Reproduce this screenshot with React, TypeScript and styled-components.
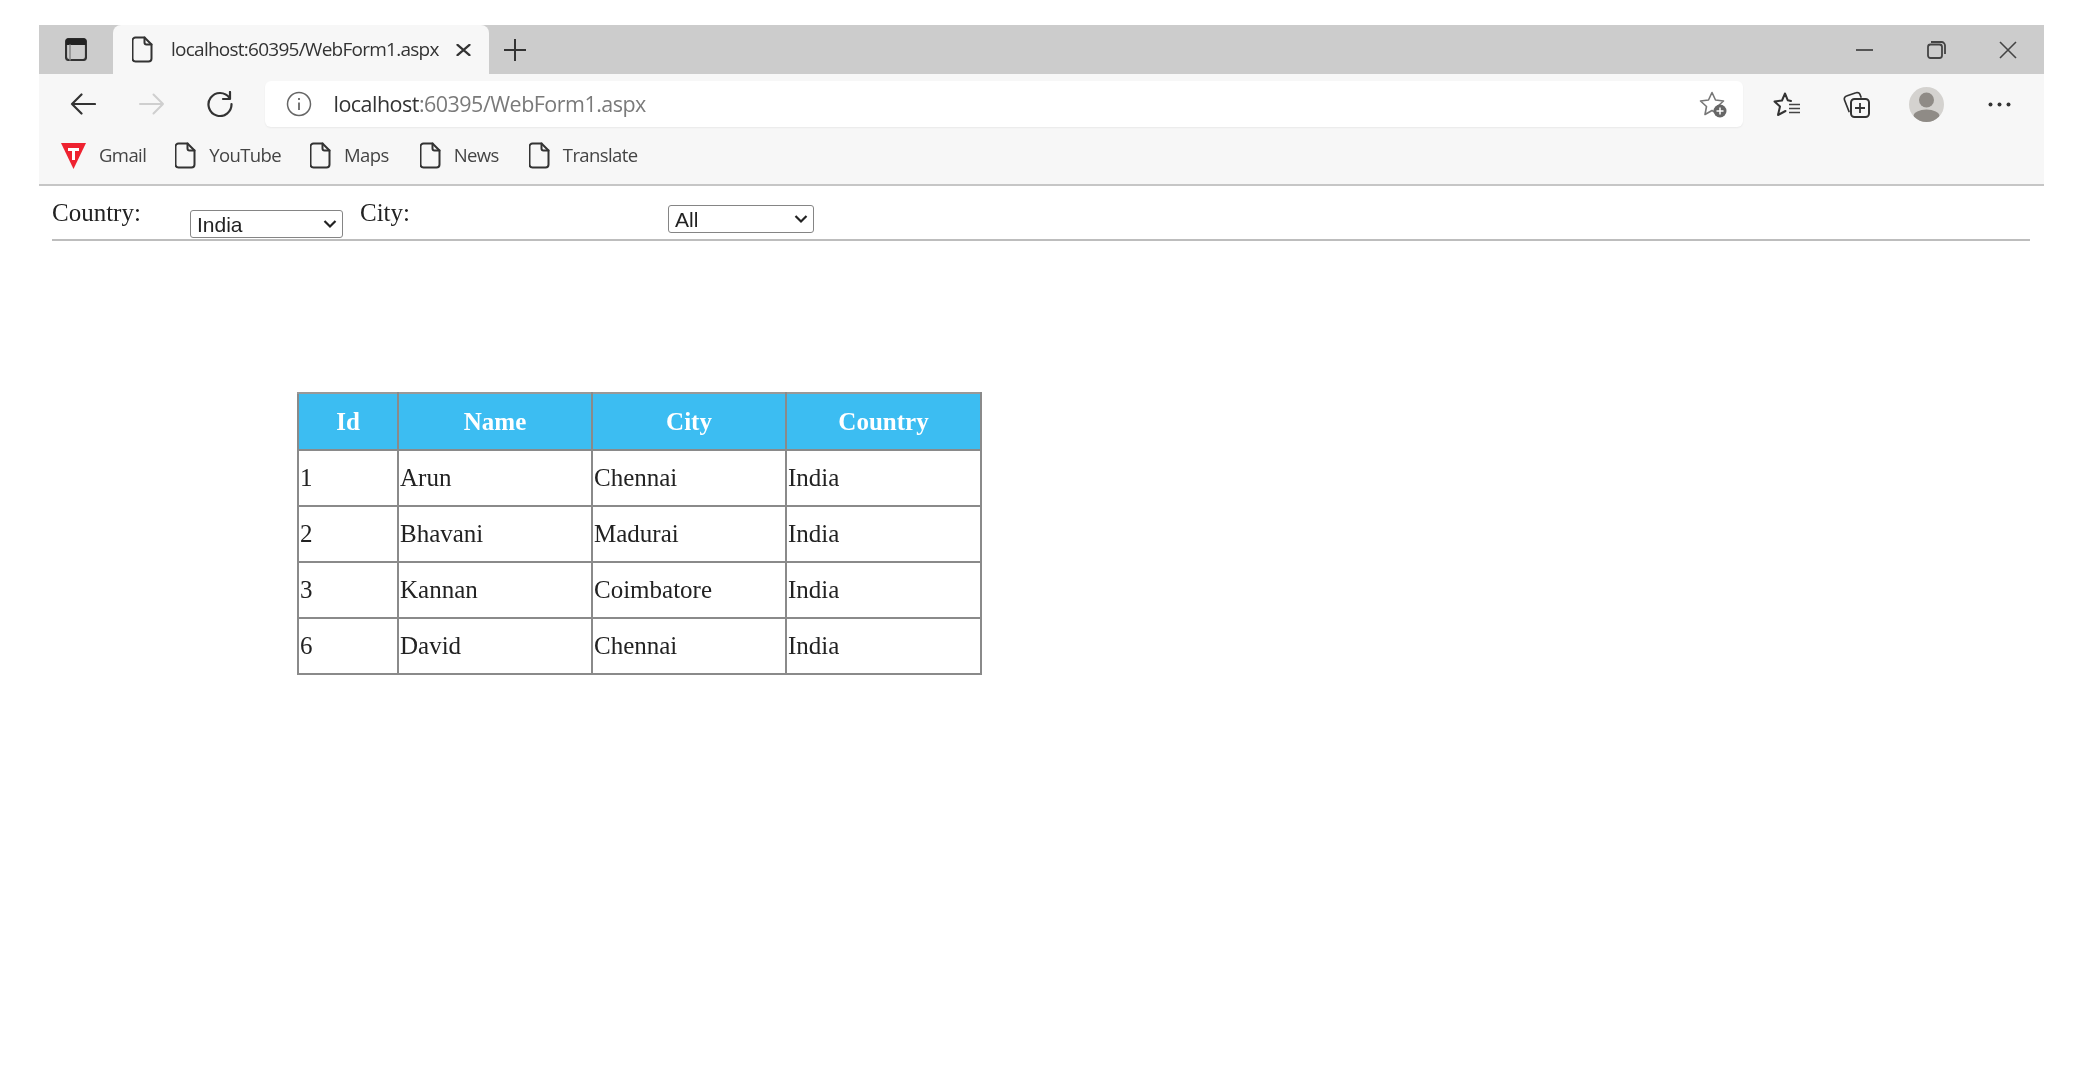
import React from "react";
import styled, { createGlobalStyle } from "styled-components";

const Global = createGlobalStyle`
  html, body { margin: 0; padding: 0; background: #fff; height: 1080px; overflow: hidden; }
  #root { height: 1080px; }
`;

const Page = styled.div`
  height: 1080px;
  box-sizing: border-box;
  padding: 25px 34px 0 39px;
  background: #fff;
  filter: blur(0.45px);
`;

const TabStrip = styled.div`
  height: 49px;
  background: #cccccc;
  display: flex;
  align-items: stretch;
`;

const SidebarBox = styled.div`
  width: 74px;
  display: flex;
  align-items: center;
  justify-content: center;
`;

const Tab = styled.div`
  width: 376px;
  background: #f7f7f7;
  border-radius: 8px 8px 0 0;
  display: flex;
  align-items: center;
  padding-left: 19px;
  box-sizing: border-box;
`;

const TabTitle = styled.span`
  font: 19px/1 "Open Sans", sans-serif;
  letter-spacing: -0.75px;
  color: #333;
  margin-left: 18px;
  width: 285px;
  white-space: nowrap;
`;

const NewTab = styled.div`
  width: 52px;
  display: flex;
  align-items: center;
  justify-content: center;
`;

const Spacer = styled.div`
  flex: 1;
`;

const WinButton = styled.div`
  width: 72px;
  display: flex;
  align-items: center;
  justify-content: center;
`;

const Toolbar = styled.div`
  height: 112px;
  box-sizing: border-box;
  background: #f7f7f7;
  border-bottom: 2px solid #c6c6c6;
  padding-top: 7px;
`;

const NavRow = styled.div`
  height: 46px;
  display: flex;
  align-items: center;
  padding: 0 12px 0 10px;
`;

const NavButton = styled.div<{ $w?: number }>`
  width: ${(p) => p.$w ?? 68.5}px;
  flex: none;
  display: flex;
  align-items: center;
  justify-content: center;
`;

const Address = styled.div`
  flex: 1;
  height: 46px;
  margin: 0 9px 0 10px;
  background: #fff;
  border-radius: 6px;
  box-shadow: 0 1px 2px rgba(0, 0, 0, 0.06);
  display: flex;
  align-items: center;
  padding: 0 16px 0 21px;
`;

const Url = styled.div`
  flex: 1;
  margin-left: 22px;
  font: 21.5px/1 "Open Sans", sans-serif;
  letter-spacing: -0.52px;
  color: #7a7a7a;
  white-space: nowrap;
`;

const Host = styled.span`
  color: #333;
`;

const Bookmarks = styled.div`
  height: 57px;
  display: flex;
  align-items: center;
  padding-left: 22px;
`;

const Bookmark = styled.div<{ $gap: number }>`
  display: flex;
  align-items: center;
  gap: 13px;
  margin-right: ${(p) => p.$gap}px;
`;

const BookmarkLabel = styled.span`
  font: 18.5px/1 "Open Sans", sans-serif;
  letter-spacing: -0.6px;
  color: #444;
  white-space: nowrap;
`;

const Content = styled.div`
  padding: 0 14px 0 13px;
`;

const FilterRow = styled.div`
  height: 55px;
  box-sizing: border-box;
  border-bottom: 2px solid #bdbdbd;
  display: flex;
  align-items: flex-start;
`;

const FilterLabel = styled.label<{ $w: number }>`
  width: ${(p) => p.$w}px;
  flex: none;
  padding-top: 12px;
  font: 25px/29px "Liberation Serif", serif;
  color: #222;
`;

const SelectWrap = styled.div<{ $w: number; $top: number; $after: number }>`
  position: relative;
  width: ${(p) => p.$w}px;
  height: 28px;
  flex: none;
  margin-top: ${(p) => p.$top}px;
  margin-right: ${(p) => p.$after}px;
`;

const Select = styled.select`
  appearance: none;
  width: 100%;
  height: 100%;
  box-sizing: border-box;
  border: 1.5px solid #858585;
  border-radius: 3px;
  background: #fff;
  padding: 0 0 0 6px;
  margin: 0;
  font: 21px "Liberation Sans", sans-serif;
  color: #222;
`;

const Chevron = styled.svg`
  position: absolute;
  right: 6px;
  top: 9px;
  pointer-events: none;
`;

const DataTable = styled.table`
  margin: 151px 0 0 245px;
  border-collapse: collapse;
  table-layout: fixed;
  width: 684px;
  border: 2px solid #c4c4c4;
  font: 25px "Liberation Serif", serif;
  color: #222;
`;

const HeadCell = styled.th<{ $w: number }>`
  width: ${(p) => p.$w}px;
  height: 55px;
  padding: 0;
  background: #3cbdf2;
  color: #fff;
  font-weight: bold;
  text-align: center;
  border: 2px solid #8a8a8a;
  border-top-color: #999;
`;

const Cell = styled.td`
  height: 54px;
  padding: 0 0 0 1px;
  border: 2px solid #8a8a8a;
`;

const Stroke = { fill: "none", stroke: "#333", strokeWidth: 2, strokeLinecap: "round", strokeLinejoin: "round" } as const;

const DocIcon = () => (
  <svg width="21" height="27" viewBox="0 0 21 27">
    <path d="M3.500 1.500h9l7 7v14a3 3 0 0 1-3 3h-13a3 3 0 0 1-3-3v-18a3 3 0 0 1 3-3z" {...Stroke} />
    <path d="M12.500 1.500v5a2 2 0 0 0 2 2h5" {...Stroke} />
  </svg>
);

const rows = [
  ["1", "Arun", "Chennai", "India"],
  ["2", "Bhavani", "Madurai", "India"],
  ["3", "Kannan", "Coimbatore", "India"],
  ["6", "David", "Chennai", "India"],
];

const bookmarks: [string, number][] = [
  ["YouTube", 29],
  ["Maps", 31],
  ["News", 30],
  ["Translate", 0],
];

const ChevronIcon = () => (
  <Chevron width="14" height="10" viewBox="0 0 14 10">
    <path d="M1.500 2 7 7.500 12.500 2" fill="none" stroke="#222" strokeWidth="2.200" />
  </Chevron>
);

export default function App() {
  return (
    <Page>
      <Global />
      <TabStrip>
        <SidebarBox>
          <svg width="22" height="23" viewBox="0 0 22 23">
            <rect x="1" y="1" width="20" height="21" rx="3" {...Stroke} strokeWidth="2.200" />
            <path d="M1 2.500a2 2 0 0 1 2-2h16a2 2 0 0 1 2 2V7H1z" fill="#222" />
            <path d="M5 7v15" {...Stroke} stroke="#888" strokeWidth="1.500" />
          </svg>
        </SidebarBox>
        <Tab>
          <DocIcon />
          <TabTitle>localhost:60395/WebForm1.aspx</TabTitle>
          <svg width="15" height="12" viewBox="0 0 15 12">
            <path d="M1.500 .8 13.500 11.200M13.500 .8 1.500 11.200" {...Stroke} strokeWidth="2.200" />
          </svg>
        </Tab>
        <NewTab>
          <svg width="24" height="24" viewBox="0 0 24 24">
            <path d="M12 1v22M1 12h22" fill="none" stroke="#333" strokeWidth="2" />
          </svg>
        </NewTab>
        <Spacer />
        <WinButton>
          <svg width="17" height="2" viewBox="0 0 17 2">
            <path d="M0 1h17" stroke="#555" strokeWidth="2" />
          </svg>
        </WinButton>
        <WinButton>
          <svg width="19" height="18" viewBox="0 0 19 18">
            <rect x="1" y="3.500" width="14" height="13.500" rx="2.500" fill="none" stroke="#444" strokeWidth="1.800" />
            <path d="M4 1h10.500a3.500 3.500 0 0 1 3.500 3.500V13" fill="none" stroke="#444" strokeWidth="1.800" />
          </svg>
        </WinButton>
        <WinButton>
          <svg width="18" height="18" viewBox="0 0 18 18">
            <path d="M1 1 17 17M17 1 1 17" fill="none" stroke="#444" strokeWidth="1.600" />
          </svg>
        </WinButton>
      </TabStrip>
      <Toolbar>
        <NavRow>
          <NavButton>
            <svg width="26" height="22" viewBox="0 0 26 22">
              <path d="M25 11H2M11.500 1.500 2 11l9.500 9.500" {...Stroke} strokeWidth="2.200" />
            </svg>
          </NavButton>
          <NavButton>
            <svg width="26" height="22" viewBox="0 0 26 22">
              <path d="M1 11h23M14.500 1.500 24 11l-9.500 9.500" {...Stroke} stroke="#cfcfcf" strokeWidth="2" />
            </svg>
          </NavButton>
          <NavButton>
            <svg width="28" height="26" viewBox="0 0 28 26">
              <path d="M23.500 7A11.500 11.500 0 1 0 25.500 13" {...Stroke} strokeWidth="2.200" />
              <path d="M24 1v7h-7" {...Stroke} strokeWidth="2.200" />
            </svg>
          </NavButton>
          <Address>
            <svg width="26" height="26" viewBox="0 0 26 26">
              <circle cx="13" cy="13" r="11.500" fill="none" stroke="#666" strokeWidth="1.500" />
              <path d="M13 11.500V19M13 7v2" fill="none" stroke="#666" strokeWidth="1.800" />
            </svg>
            <Url>
              <Host>localhost</Host>:60395/WebForm1.aspx
            </Url>
            <svg width="28" height="27" viewBox="0 0 28 27">
              <path d="M13 1.500l3.500 7.500 8 1-6 5.500 1.500 8-7-4-7 4 1.500-8-6-5.500 8-1z" fill="none" stroke="#777" strokeWidth="1.600" strokeLinejoin="round" />
              <circle cx="21" cy="20" r="6.500" fill="#666" />
              <path d="M21 16.500v7M17.500 20h7" stroke="#fff" strokeWidth="1.500" />
            </svg>
          </Address>
          <NavButton $w={70}>
            <svg width="28" height="25" viewBox="0 0 28 25">
              <path d="M18 9 14.800 8.300 12 1.500 9 8.500 1.500 9.500 7 14.500 5 23 12.500 19" {...Stroke} />
              <path d="M16 12.500h11M16 16.500h11M16 20.500h11" fill="none" stroke="#444" strokeWidth="1.600" />
            </svg>
          </NavButton>
          <NavButton $w={68}>
            <svg width="28" height="27" viewBox="0 0 28 27">
              <path d="M7 20.500 2.500 9a3 3 0 0 1 2-4L14 1.800a3 3 0 0 1 4 1.700L19 6" {...Stroke} strokeWidth="1.700" />
              <rect x="9" y="8" width="18" height="18" rx="3.500" {...Stroke} />
              <path d="M18 12v10M13 17h10" fill="none" stroke="#333" strokeWidth="1.800" />
            </svg>
          </NavButton>
          <NavButton $w={72}>
            <svg width="35" height="35" viewBox="0 0 35 35">
              <defs>
                <clipPath id="avatarClip">
                  <circle cx="17.500" cy="17.500" r="17.500" />
                </clipPath>
              </defs>
              <circle cx="17.500" cy="17.500" r="17.500" fill="#d4d2cf" />
              <g clipPath="url(#avatarClip)" fill="#8f8b86">
                <circle cx="17.500" cy="13" r="7.500" />
                <ellipse cx="17.500" cy="29" rx="13" ry="6.500" />
              </g>
            </svg>
          </NavButton>
          <NavButton $w={70}>
            <svg width="23" height="5" viewBox="0 0 23 5" style={{ marginLeft: 5 }}>
              <circle cx="2.500" cy="2.500" r="2" fill="#333" />
              <circle cx="11.500" cy="2.500" r="2" fill="#333" />
              <circle cx="20.500" cy="2.500" r="2" fill="#333" />
            </svg>
          </NavButton>
        </NavRow>
        <Bookmarks>
          <Bookmark $gap={29}>
            <svg width="25" height="26" viewBox="0 0 25 26">
              <path d="M0 0h25L12.500 26z" fill="#ee2230" />
              <path d="M7 5h11v3h-4v9h-3V8H7z" fill="#fff" />
            </svg>
            <BookmarkLabel>Gmail</BookmarkLabel>
          </Bookmark>
          {bookmarks.map(([name, gap]) => (
            <Bookmark key={name} $gap={gap}>
              <DocIcon />
              <BookmarkLabel>{name}</BookmarkLabel>
            </Bookmark>
          ))}
        </Bookmarks>
      </Toolbar>
      <Content>
        <FilterRow>
          <FilterLabel $w={138}>Country:</FilterLabel>
          <SelectWrap $w={153} $top={24} $after={17}>
            <Select defaultValue="India">
              <option>India</option>
            </Select>
            <ChevronIcon />
          </SelectWrap>
          <FilterLabel $w={308}>City:</FilterLabel>
          <SelectWrap $w={146} $top={19} $after={0}>
            <Select defaultValue="All">
              <option>All</option>
            </Select>
            <ChevronIcon />
          </SelectWrap>
        </FilterRow>
        <DataTable>
          <thead>
            <tr>
              <HeadCell $w={98}>Id</HeadCell>
              <HeadCell $w={192}>Name</HeadCell>
              <HeadCell $w={192}>City</HeadCell>
              <HeadCell $w={193}>Country</HeadCell>
            </tr>
          </thead>
          <tbody>
            {rows.map((r) => (
              <tr key={r[0]}>
                {r.map((c, i) => (
                  <Cell key={i}>{c}</Cell>
                ))}
              </tr>
            ))}
          </tbody>
        </DataTable>
      </Content>
    </Page>
  );
}
